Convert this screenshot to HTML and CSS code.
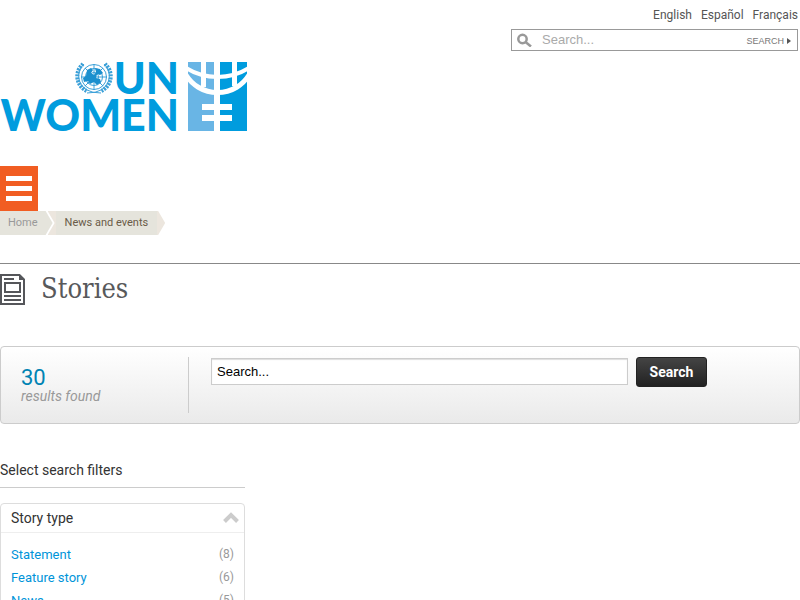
FILE: index.html
```html
<!DOCTYPE html>
<html lang="en">
<head>
<meta charset="utf-8">
<meta name="viewport" content="width=device-width, initial-scale=1">
<title>Stories | UN Women</title>
<link rel="stylesheet" href="styles.css">
</head>
<body>
<header class="site-header">
  <nav class="languages" aria-label="Languages">
    <a href="#">English</a>
    <a href="#">Español</a>
    <a href="#">Français</a>
  </nav>
  <form class="site-search" role="search">
    <svg class="search-icon" width="16" height="14" viewBox="0 0 16 14" aria-hidden="true"><circle cx="5.500" cy="6" r="4.200"/><path d="M8.500 9l5.500 4.500"/></svg>
    <input type="search" placeholder="Search..." aria-label="Search the site">
    <button type="submit">SEARCH<svg width="4" height="6" viewBox="0 0 4 6" aria-hidden="true"><path d="M0 0l4 3-4 3z"/></svg></button>
  </form>
  <a class="logo" href="#" aria-label="UN Women">
    <svg width="248" height="72" viewBox="0 0 248 72">
      <g class="emblem">
        <circle cx="94" cy="15" r="12.500"/>
        <circle cx="94" cy="15" r="8.500"/>
        <circle cx="94" cy="15" r="4.500"/>
        <path d="M94 2v26M81 15h26M85 6l18 18M103 6L85 24"/>
        <path class="land" d="M87 8l4-2 2 2-2 3 3 2 2-3-1-4 5 1 3 4-3 2-3-1-1 4 4 1 1 3-4 3-3-3-4 2-2-3-4 1-1-4 3-2z"/>
        <path class="wreath" d="M84 2A16 16 0 0 0 87 28q5 3 14 3M104 2A16 16 0 0 1 101 28q-5 3-14 3"/>
        <path class="leaves" d="M83 2A16 16 0 0 0 87 29M105 2A16 16 0 0 1 101 29"/>
      </g>
      <text class="wordmark" x="179" y="32" text-anchor="end">UN</text>
      <text class="wordmark" x="179" y="69" text-anchor="end">WOMEN</text>
      <path class="symbol-light" d="M188 0h26v69h-26z"/>
      <path class="symbol-dark" d="M220 0h27v69h-27z"/>
      <path class="symbol-cut" d="M201 0h5v25h-5zM232 0h5v24h-5zM202 42h30v6h-30zM202 53h30v6h-30z"/>
      <path class="symbol-arc upper" d="M186 6A60 60 0 0 0 249 6"/>
      <path class="symbol-arc lower" d="M186 13A37 37 0 0 0 249 13"/>
    </svg>
  </a>
</header>

<button class="menu-button" type="button" aria-label="Menu"><span></span><span></span><span></span></button>

<nav class="breadcrumb" aria-label="Breadcrumb">
  <a class="crumb home" href="#">Home</a>
  <a class="crumb current" href="#">News and events</a>
</nav>

<main>
  <div class="page-title">
    <svg width="25" height="31" viewBox="0 0 25 31" aria-hidden="true"><path class="sheet" d="M1 1h18.500l4.500 4.500v24.500h-23z"/><path d="M4 4h10v2h-10zM19 0v6h6zM4 21h17v2h-17zM4 25h17v2h-17z"/><path class="frame" d="M5 9h15v9h-15z"/></svg>
    <h1>Stories</h1>
  </div>

  <form class="results-panel">
    <div class="result-count"><strong>30</strong><em>results found</em></div>
    <div class="query">
      <input type="text" value="Search..." aria-label="Search stories">
      <button type="submit">Search</button>
    </div>
  </form>

  <aside class="filters">
    <h2>Select search filters</h2>
    <section class="filter-box">
      <h3>Story type <svg width="16" height="12" viewBox="0 0 16 12" aria-hidden="true"><path d="M1.500 9.500L8 3l6.500 6.500"/></svg></h3>
      <ul>
        <li><a href="#">Statement</a><span>(8)</span></li>
        <li><a href="#">Feature story</a><span>(6)</span></li>
        <li><a href="#">News</a><span>(5)</span></li>
      </ul>
    </section>
  </aside>
</main>
</body>
</html>
```
FILE: styles.css
```css
* {
  box-sizing: border-box;
}

html {
  overflow: hidden;
}

body {
  margin: 0;
  background: #fff;
  color: #333;
  font: 14px/20px Roboto, "Liberation Sans", sans-serif;
}

a {
  text-decoration: none;
}

/* Header */
.site-header {
  display: flex;
  flex-direction: column;
  align-items: flex-end;
  padding-top: 5px;
}

.languages {
  display: flex;
  gap: 9px;
  padding-right: 2px;
  font-size: 12px;
}

.languages a {
  color: #555;
}

.site-search {
  display: flex;
  align-items: center;
  width: 287px;
  height: 22px;
  margin: 4px 2px 0 0;
  padding: 0 6px 0 5px;
  border: 1px solid #999;
}

.search-icon {
  flex: none;
  fill: none;
  stroke: #999;
  stroke-width: 2.5;
}

.site-search input {
  flex: 1;
  min-width: 0;
  padding: 0 9px;
  border: 0;
  background: none;
  font: 13px/18px "Liberation Sans", Arial, sans-serif;
}

.site-search input::placeholder {
  color: #aaa;
}

.site-search button {
  display: flex;
  align-items: center;
  gap: 3px;
  padding: 2px 0 0;
  border: 0;
  background: none;
  color: #777;
  font: 9px/12px "Liberation Sans", Arial, sans-serif;
}

.site-search button svg {
  fill: #555;
}

/* Logo */
.logo {
  align-self: flex-start;
  margin-top: 11px;
}

.logo svg {
  display: block;
  overflow: visible;
}

.wordmark {
  fill: #009cde;
  font: 900 43px Lato, sans-serif;
}

.emblem {
  fill: none;
  stroke: #3ba0d8;
  stroke-width: 1;
}

.emblem .land {
  fill: #1a8fce;
  stroke: none;
}

.emblem .leaves {
  stroke-width: 4;
  stroke-dasharray: 2 1;
}

.symbol-light {
  fill: #69b5e5;
}

.symbol-dark {
  fill: #009cde;
}

.symbol-cut {
  fill: #fff;
}

.symbol-arc {
  fill: none;
  stroke: #fff;
  stroke-width: 4;
}

.symbol-arc.lower {
  stroke-width: 5;
}

/* Menu and breadcrumb */
.menu-button {
  display: flex;
  flex-direction: column;
  gap: 5px;
  width: 38px;
  height: 45px;
  margin-top: 32px;
  padding: 10px 6px;
  border: 0;
  background: #f15d22;
}

.menu-button span {
  width: 26px;
  height: 5px;
  background: #fff;
}

.breadcrumb {
  display: flex;
  font-size: 11px;
  line-height: 24px;
}

.crumb {
  background: #e5e4dc;
  clip-path: polygon(0 0, calc(100% - 7px) 0, 100% 50%, calc(100% - 7px) 100%, 0 100%);
}

.crumb.home {
  padding: 0 15px 0 8px;
  color: #999;
}

.crumb.current {
  margin-left: -5px;
  padding: 0 17px;
  background: linear-gradient(to right, #ece6de 8px, #e5e4dc 8px, #e5e4dc calc(100% - 8px), #ece6de calc(100% - 8px));
  clip-path: polygon(0 0, calc(100% - 7px) 0, 100% 50%, calc(100% - 7px) 100%, 0 100%, 7px 50%);
  color: #6a5b48;
}

/* Title */
main {
  margin-top: 28px;
  border-top: 1px solid #888;
}

.page-title {
  display: flex;
  align-items: center;
  gap: 16px;
  padding-top: 8px;
}

.page-title svg {
  fill: #55565a;
}

.page-title .sheet,
.page-title .frame {
  fill: none;
  stroke: #55565a;
  stroke-width: 2;
}

h1 {
  margin: 0;
  color: #58595b;
  font: 27px/34px "DejaVu Serif Condensed", "DejaVu Serif", serif;
}

/* Results panel */
.results-panel {
  display: flex;
  height: 78px;
  margin-top: 40px;
  padding: 10px 20px;
  border: 1px solid #ccc;
  border-radius: 4px;
  background: linear-gradient(#fff, #eaeaea);
}

.result-count {
  width: 168px;
  padding-top: 9px;
  border-right: 1px solid #ccc;
}

.result-count strong,
.result-count em {
  display: block;
}

.result-count strong {
  color: #0083b3;
  font-size: 22px;
  font-weight: 400;
  line-height: 23px;
}

.result-count em {
  color: #999;
  line-height: 15px;
}

.query {
  display: flex;
  flex: 1;
  align-items: flex-start;
  gap: 8px;
  padding: 0 72px 0 22px;
}

.query input {
  flex: 1;
  min-width: 0;
  height: 27px;
  margin-top: 1px;
  padding: 0 5px;
  border: 1px solid #ccc;
  background: #fff;
  box-shadow: inset 0 1px 1px #ddd;
  color: #000;
  font: 13px "Liberation Sans", Arial, sans-serif;
}

.query button {
  min-width: 71px;
  height: 30px;
  padding: 0 12px;
  border: 1px solid #222;
  border-radius: 3px;
  background: linear-gradient(#444, #222);
  color: #fff;
  font: 700 14px Roboto, sans-serif;
}

/* Filters */
.filters {
  width: 245px;
  margin-top: 36px;
}

h2,
h3 {
  margin: 0;
  color: #333;
  font-size: 14px;
  font-weight: 400;
}

h2 {
  padding-bottom: 7px;
  border-bottom: 1px solid #ccc;
}

.filter-box {
  margin-top: 15px;
  border: 1px solid #ddd;
  border-radius: 4px;
}

h3 {
  display: flex;
  align-items: center;
  justify-content: space-between;
  padding: 4px 5px 4px 10px;
  border-bottom: 1px solid #eee;
}

h3 svg {
  fill: none;
  stroke: #ccc;
  stroke-width: 4;
}

.filter-box ul {
  margin: 0;
  padding: 10px;
  list-style: none;
}

.filter-box li {
  display: flex;
  justify-content: space-between;
  font-size: 13px;
  line-height: 23px;
}

.filter-box li a {
  color: #0094d9;
}

.filter-box li span {
  color: #999;
  font-size: 12px;
}
```
